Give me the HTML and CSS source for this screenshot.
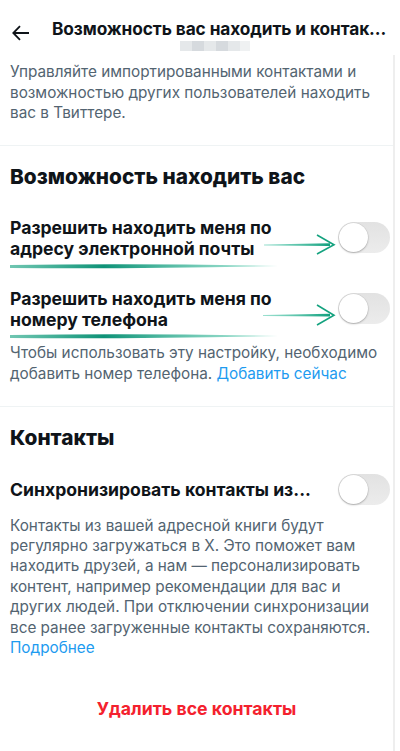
FILE: index.html
```html
<!DOCTYPE html>
<html lang="ru">
<head>
<meta charset="utf-8">
<link rel="stylesheet" href="styles.css">
</head>
<body>
<header class="topbar">
  <svg class="back" width="20" height="20" viewBox="0 0 20 20"><path d="M18 10H2.5M9 3.2L2.3 10 9 16.8" fill="none" stroke="#0f1419" stroke-width="1.8"/></svg>
  <div class="titles">
    <div class="title">Возможность вас находить и контак...</div>
    <div class="sub"><i></i><i class="b"></i><i></i><i class="b"></i><i></i><i class="c"></i></div>
  </div>
</header>
<main class="content">
  <p class="intro">Управляйте импортированными контактами и возможностью других пользователей находить вас в Твиттере.</p>
  <hr class="divider">
  <section class="section">
    <h2 class="h2">Возможность находить вас</h2>
    <div class="row row-first">
      <div class="label">Разрешить находить меня по адресу электронной почты</div>
      <span class="toggle"><span class="knob"></span></span>
      <svg class="mark" width="400" height="60" viewBox="0 0 400 60">
        <defs>
          <linearGradient id="ul" x1="0" x2="1"><stop offset="0" stop-color="#12a07e" stop-opacity=".6"/><stop offset=".35" stop-color="#0e9277"/><stop offset="1" stop-color="#38c3a0" stop-opacity=".35"/></linearGradient>
          <linearGradient id="ar" x1="0" x2="1"><stop offset="0" stop-color="#3cc2a2" stop-opacity=".5"/><stop offset="1" stop-color="#12a07e"/></linearGradient>
        </defs>
        <path d="M10 48 Q140 46 278 49 Q140 52 10 51Z" fill="url(#ul)"/>
        <path d="M264 27.5 L330 26.3 L330 29 L264 28.5Z" fill="url(#ar)"/>
        <path d="M317 18 L334 27.7 L317 37" fill="none" stroke="#14a27f" stroke-width="1.6"/>
      </svg>
    </div>
    <div class="row row-second">
      <div class="label">Разрешить находить меня по номеру телефона</div>
      <span class="toggle"><span class="knob"></span></span>
      <svg class="mark" width="400" height="60" viewBox="0 0 400 60">
        <path d="M10 47 Q140 45 278 48 Q140 51 10 50Z" fill="url(#ul)"/>
        <path d="M263 27 L330 25.8 L330 28.5 L263 28Z" fill="url(#ar)"/>
        <path d="M317 17 L334 27.2 L317 37" fill="none" stroke="#14a27f" stroke-width="1.6"/>
      </svg>
    </div>
    <p class="hint">Чтобы использовать эту настройку, необходимо добавить номер телефона. <a class="link">Добавить сейчас</a></p>
  </section>
  <hr class="divider">
  <section class="section">
    <h2 class="h2">Контакты</h2>
    <div class="row row-sync">
      <div class="label">Синхронизировать контакты из...</div>
      <span class="toggle"><span class="knob"></span></span>
    </div>
    <p class="hint hint-long">Контакты из вашей адресной книги будут регулярно загружаться в X. Это поможет вам находить друзей, а нам — персонализировать контент, например рекомендации для вас и других людей. При отключении синхронизации все ранее загруженные контакты сохраняются. <a class="link">Подробнее</a></p>
  </section>
  <div class="danger">Удалить все контакты</div>
</main>
</body>
</html>
```
FILE: styles.css
```css
* { box-sizing: border-box; }
html, body { margin: 0; padding: 0; background: #fff; }
body {
  width: 400px;
  height: 751px;
  overflow: hidden;
  font-family: "Inter", "Roboto", "Liberation Sans", sans-serif;
  color: #0f1419;
}
.topbar {
  height: 55px;
  display: flex;
  align-items: flex-start;
}
.back { margin: 23px 0 0 11px; flex: none; }
.titles { margin-left: 21px; display: flex; flex-direction: column; align-items: flex-start; }
.title {
  margin-top: 19px;
  font-size: 17.3px;
  font-weight: 700;
  line-height: 20px;
  white-space: nowrap;
  letter-spacing: -0.1px;
}
.sub { display: flex; height: 10px; margin: 2px 0 0 128px; opacity: .9; }
.sub i { display: block; width: 12px; height: 10px; background: #e3e6e8; }
.sub i.b { background: #d2d7db; }
.sub i.c { background: #eef0f1; width: 10px; }
.content {
  width: 395px;
  border-right: 2px solid #eeeeee;
  min-height: 696px;
}
.intro {
  margin: 0;
  padding: 7px 10px 21px;
  font-size: 15.3px;
  line-height: 20.5px;
  color: #536471;
}
.divider { margin: 0; border: 0; height: 1px; background: #eff3f4; }
.section { padding: 0 3px 0 10px; }
.h2 {
  margin: 0;
  padding-top: 19px;
  font-size: 20.8px;
  line-height: 24px;
  font-weight: 800;
}
.row {
  position: relative;
  display: flex;
  align-items: center;
  justify-content: space-between;
}
.row-first { margin-top: 28px; }
.row-second { margin-top: 29px; }
.row-sync { margin-top: 24px; }
.label {
  width: 310px;
  font-size: 17.6px;
  font-weight: 700;
  line-height: 21px;
}
.toggle {
  flex: none;
  width: 52px;
  height: 31px;
  border-radius: 16px;
  background: linear-gradient(#e2e2e2, #ececec);
  display: flex;
  align-items: center;
  padding-left: 1px;
}
.knob {
  width: 29px;
  height: 29px;
  border-radius: 50%;
  background: #fff;
  box-shadow: 0 1px 2px rgba(0,0,0,.25), 0 0 0 .5px rgba(0,0,0,.08);
}
.mark {
  position: absolute;
  left: -10px;
  top: 0;
  pointer-events: none;
}
.hint {
  margin: 12px 0 0;
  padding-bottom: 22px;
  padding-right: 7px;
  font-size: 15.3px;
  line-height: 21px;
  color: #536471;
}
.hint-long { margin-top: 11px; line-height: 20.4px; padding-bottom: 0; }
.link { color: #1d9bf0; }
.danger {
  text-align: center;
  margin-top: 40px;
  font-size: 17.7px;
  font-weight: 700;
  color: #f4212e;
}
```
